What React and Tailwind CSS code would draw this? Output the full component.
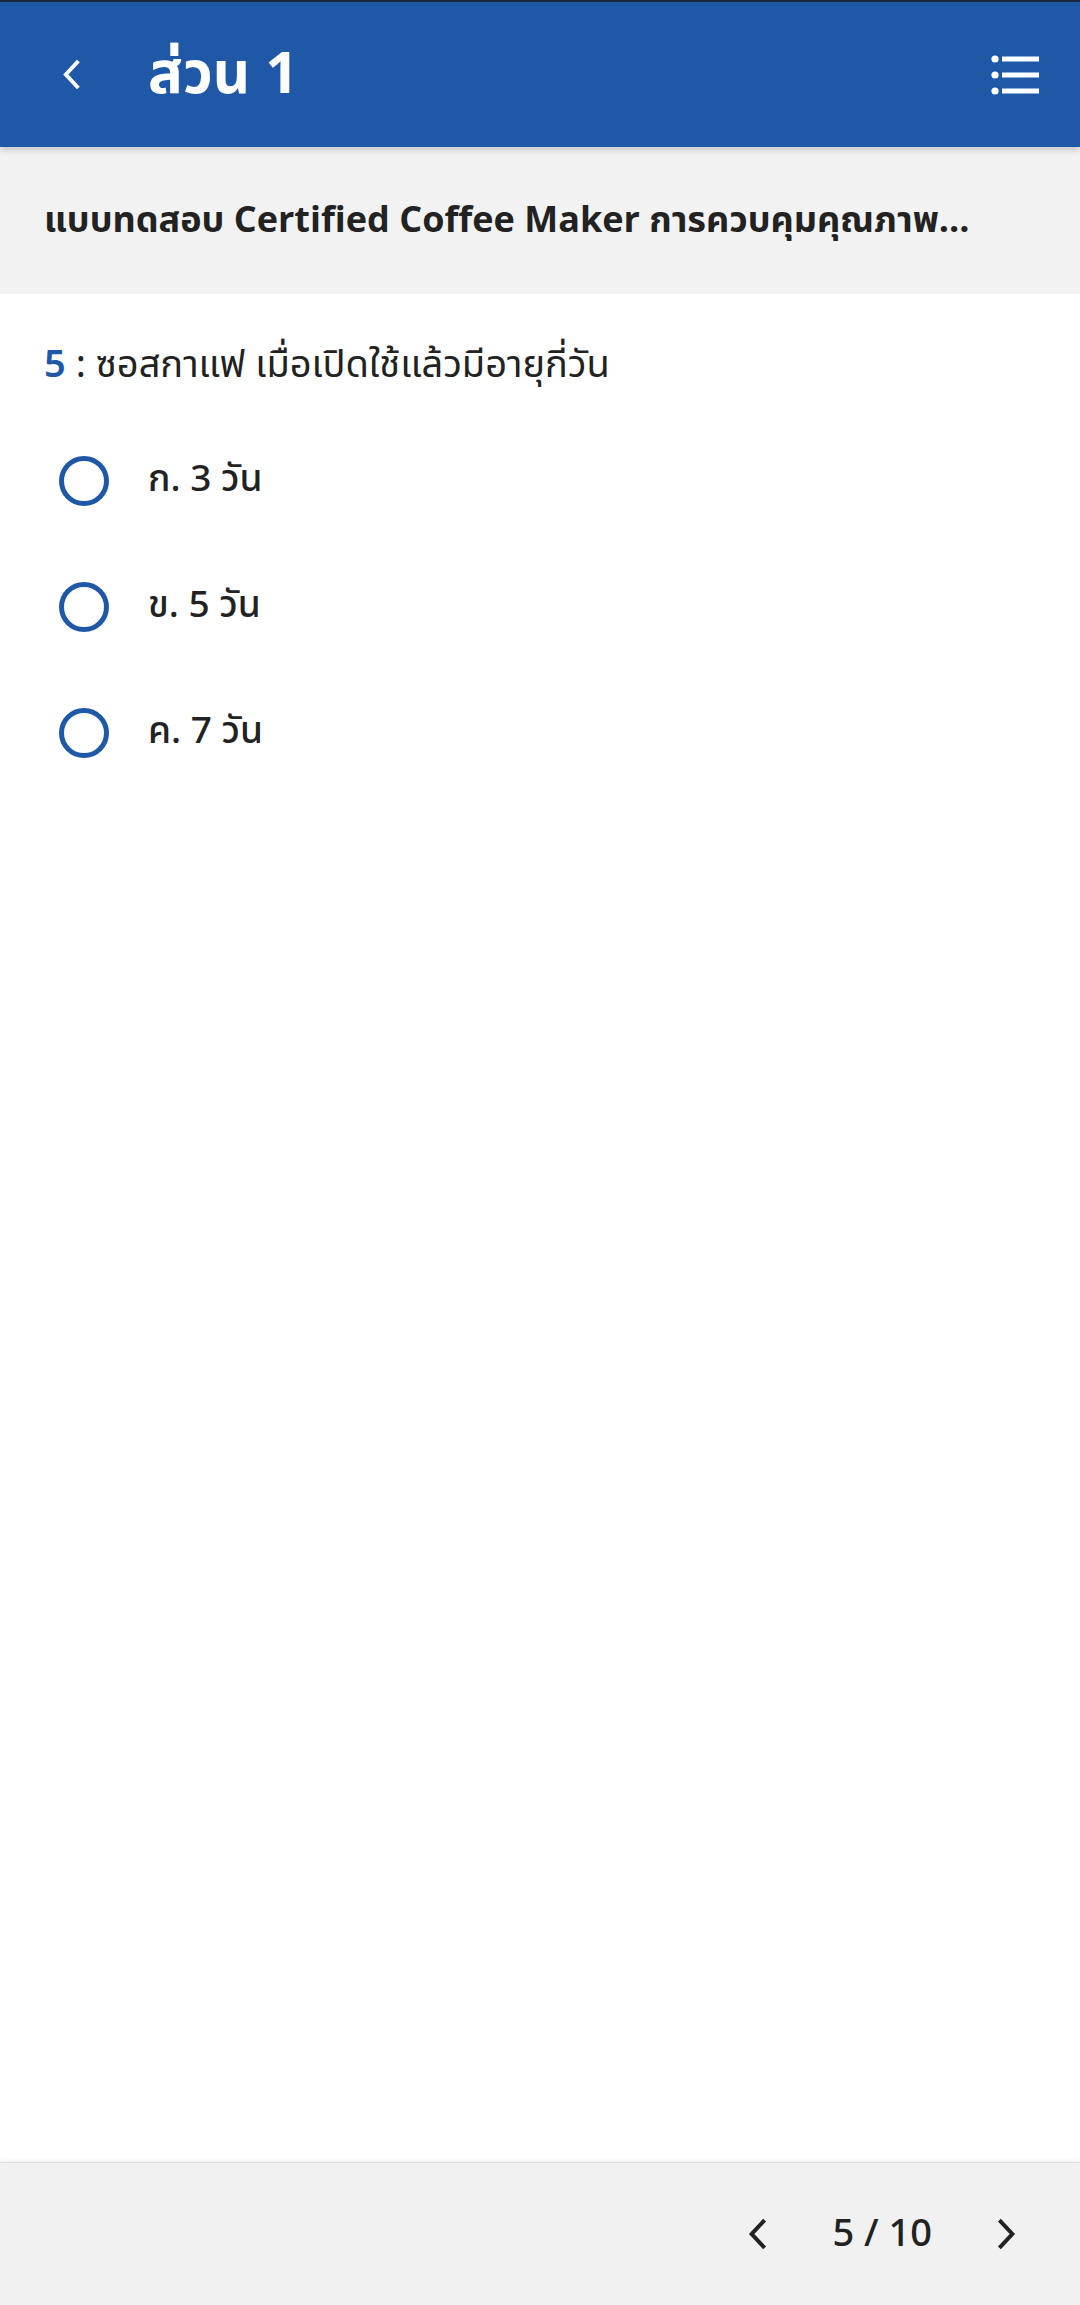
import React, { useState } from 'react';

const options = ['ก. 3 วัน', 'ข. 5 วัน', 'ค. 7 วัน'];

const font = { fontFamily: '"Noto Sans Thai", "Noto Sans", "Liberation Sans", sans-serif' };

const Chevron = ({ dir = 'left', className }) => (
  <svg viewBox="0 0 24 36" className={className} fill="none" stroke="currentColor" strokeWidth="4.5" strokeLinecap="square">
    {dir === 'left' ? <path d="M19 4 L6 18 L19 32" /> : <path d="M5 4 L18 18 L5 32" />}
  </svg>
);

const MenuIcon = () => (
  <svg viewBox="0 0 50 40" className="w-[50px] h-[40px]" fill="white">
    <circle cx="4" cy="4" r="3.6" />
    <circle cx="4" cy="20" r="3.6" />
    <circle cx="4" cy="36" r="3.6" />
    <rect x="11" y="1.5" width="37" height="5" />
    <rect x="11" y="17.5" width="37" height="5" />
    <rect x="11" y="33.5" width="37" height="5" />
  </svg>
);

const App = () => {
  const [selected, setSelected] = useState(null);

  return (
    <div className="flex flex-col h-[2305px] bg-white" style={font}>
      {/* Header */}
      <div className="h-[147px] bg-[#1f58a7] border-t-2 border-[#1c2740] flex items-center px-[60px] shadow-[0_3px_6px_rgba(0,0,0,0.18)] relative z-10">
        <Chevron dir="left" className="w-[22px] h-[31px] text-white" />
        <h1 className="ml-[66px] text-[58px] font-bold text-white leading-none">ส่วน 1</h1>
        <div className="ml-auto mr-[-21px]">
          <MenuIcon />
        </div>
      </div>

      {/* Exam title */}
      <div className="h-[147px] bg-[#f2f2f2] flex items-center px-[44px]">
        <p className="text-[36px] font-bold text-[#222] truncate">
          แบบทดสอบ Certified Coffee Maker การควบคุมคุณภาพ...
        </p>
      </div>

      {/* Question */}
      <div className="flex-1 px-[44px] pt-[48px]">
        <p className="text-[38px] text-[#222] leading-[48px]">
          <span className="text-[#1f58a7] font-semibold">5</span> : ซอสกาแฟ เมื่อเปิดใช้แล้วมีอายุกี่วัน
        </p>
        <div className="mt-[28px] flex flex-col">
          {options.map((opt, i) => (
            <button
              key={i}
              onClick={() => setSelected(i)}
              className="h-[126px] flex items-center text-left"
            >
              <span className="ml-[15px] w-[50px] h-[50px] rounded-full border-[5px] border-[#1f58a7] flex items-center justify-center">
                {selected === i && <span className="w-[24px] h-[24px] rounded-full bg-[#1f58a7]" />}
              </span>
              <span className="ml-[39px] text-[37px] font-medium text-[#222]">{opt}</span>
            </button>
          ))}
        </div>
      </div>

      {/* Footer */}
      <div className="h-[143px] bg-[#f1f1f1] border-t border-[#dedede] shadow-[0_-2px_4px_rgba(0,0,0,0.06)] flex items-center justify-end pr-[62px]">
        <Chevron dir="left" className="w-[22px] h-[32px] text-[#222]" />
        <span className="ml-[64px] mr-[64px] text-[38px] text-[#222] font-medium">5 / 10</span>
        <Chevron dir="right" className="w-[22px] h-[32px] text-[#222]" />
      </div>
    </div>
  );
};

export default App;
